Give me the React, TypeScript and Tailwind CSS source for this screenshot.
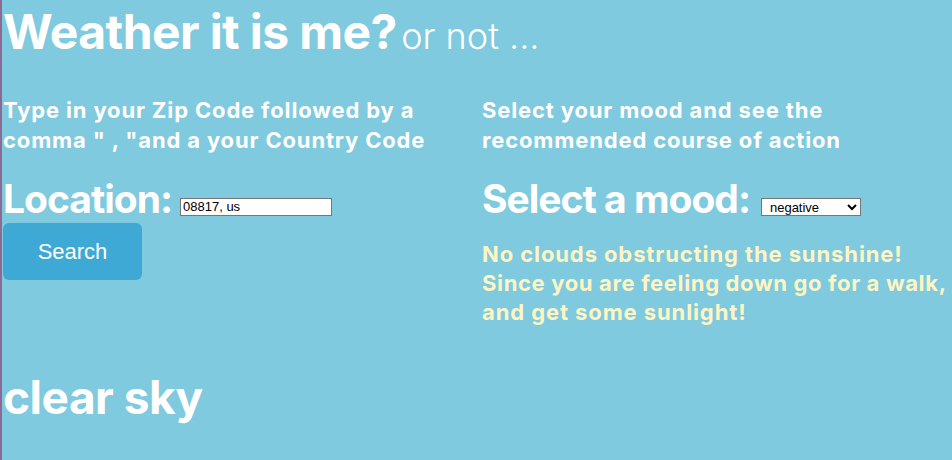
const FONT = { fontFamily: 'Inter, "Noto Sans", sans-serif' };
const CONTROL = { fontFamily: '"Liberation Sans", Arial, sans-serif' };

export default function App() {
  return (
    <div
      className="w-[952px] h-[460px] bg-[#7fcadf] border-l-2 border-[#8b6a93] overflow-hidden text-white"
      style={FONT}
    >
      <div className="pl-[1px]">
        <h1 className="pt-[2px] leading-[60px] whitespace-nowrap">
          <span className="text-[48px] font-bold tracking-[-0.6px]">Weather it is me?</span>{' '}
          <span className="text-[36px] font-light">or not ...</span>
        </h1>

        <div className="flex mt-[22px]">
          {/* left column */}
          <div className="w-[479px] shrink-0">
            <p className="text-[22px] font-bold leading-[30px] tracking-[0.85px]">
              Type in your Zip Code followed by a
              <br />
              comma " , "and a your Country Code
            </p>
            <div className="flex items-end mt-[16px] h-[52px]">
              <span className="text-[39px] font-bold leading-[48px] tracking-[-1px]">Location:</span>
              <input
                defaultValue="08817, us"
                className="ml-[8px] mb-[7px] w-[152px] h-[18px] bg-white border border-[#767676] text-black text-[13px] px-[2px]"
                style={CONTROL}
              />
            </div>
            <button
              className="w-[139px] h-[57px] rounded-[6px] bg-[#3ea9d4] text-[22px] text-white"
              style={CONTROL}
            >
              Search
            </button>
          </div>

          {/* right column */}
          <div className="flex-1 min-w-0">
            <p className="text-[22px] font-bold leading-[30px] tracking-[0.85px]">
              Select your mood and see the
              <br />
              recommended course of action
            </p>
            <div className="flex items-end mt-[16px] h-[52px]">
              <span className="text-[39px] font-bold leading-[48px] tracking-[-1px]">Select a mood:</span>
              <select
                defaultValue="negative"
                className="ml-[11px] mb-[7px] w-[100px] h-[18px] bg-white border border-[#767676] text-black text-[13px] pl-[4px]"
                style={{ ...CONTROL, appearance: 'auto' }}
              >
                <option value="positive">positive</option>
                <option value="negative">negative</option>
              </select>
            </div>
            <p className="mt-[17px] text-[22px] font-bold leading-[29px] tracking-[0.9px] text-[#fdf6c4] whitespace-nowrap">
              No clouds obstructing the sunshine!
              <br />
              <span className="tracking-[0.65px]">Since you are feeling down go for a walk,</span>
              <br />
              and get some sunlight!
            </p>
          </div>
        </div>

        <h2 className="mt-[42px] text-[46px] font-bold leading-[56px] tracking-[-0.5px]">clear sky</h2>
      </div>
    </div>
  );
}
